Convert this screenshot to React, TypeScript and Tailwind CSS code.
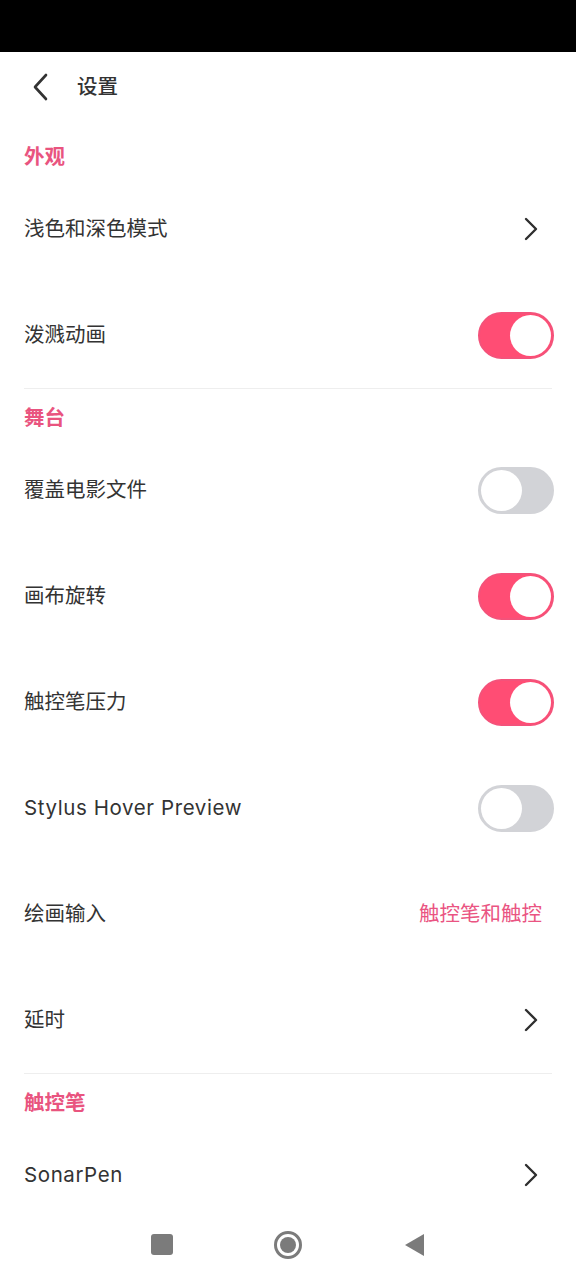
import React from 'react';

const font = { fontFamily: 'Inter, "Noto Sans CJK SC", sans-serif' };

type Row =
  | { label: string; kind: 'link' }
  | { label: string; kind: 'toggle'; on: boolean }
  | { label: string; kind: 'value'; value: string };

const sections: { title: string; rows: Row[] }[] = [
  {
    title: '外观',
    rows: [
      { label: '浅色和深色模式', kind: 'link' },
      { label: '泼溅动画', kind: 'toggle', on: true },
    ],
  },
  {
    title: '舞台',
    rows: [
      { label: '覆盖电影文件', kind: 'toggle', on: false },
      { label: '画布旋转', kind: 'toggle', on: true },
      { label: '触控笔压力', kind: 'toggle', on: true },
      { label: 'Stylus Hover Preview', kind: 'toggle', on: false },
      { label: '绘画输入', kind: 'value', value: '触控笔和触控' },
      { label: '延时', kind: 'link' },
    ],
  },
  {
    title: '触控笔',
    rows: [{ label: 'SonarPen', kind: 'link' }],
  },
];

// latin labels use a wider spacing so they come close to the app's geometric font
const isLatin = (s: string) => /^[A-Za-z ]+$/.test(s);

const Chevron = () => (
  <svg width="16" height="24" viewBox="0 0 16 24" fill="none" className="mr-[15px]">
    <path d="M3 2 L13 12 L3 22" stroke="#2f2f2f" strokeWidth="2.4" strokeLinecap="round" strokeLinejoin="round" />
  </svg>
);

const Toggle = ({ on }: { on: boolean }) => (
  <div
    className={`w-[76px] h-[47px] rounded-full border-2 flex items-center ${
      on ? 'bg-[#ff4d74] border-[#f4527a] justify-end' : 'bg-[#d2d3d7] border-[#d2d3d7] justify-start'
    }`}
  >
    <div className="w-[41px] h-[41px] rounded-full bg-white mx-[1px]" />
  </div>
);

export default function App() {
  return (
    <div className="w-[576px] h-[1280px] bg-white flex flex-col overflow-hidden" style={font}>
      {/* status bar */}
      <div className="h-[52px] bg-black shrink-0" />

      <div className="flex-1 overflow-hidden">
        {/* top bar */}
        <div className="h-[70px] flex items-center px-[30px] gap-[25px]">
          <svg width="22" height="28" viewBox="0 0 22 28" fill="none">
            <path d="M16 2 L5 14 L16 26" stroke="#333333" strokeWidth="2.6" strokeLinecap="round" strokeLinejoin="round" />
          </svg>
          <span className="text-[20.5px] font-medium text-[#333333] leading-none">设置</span>
        </div>

        {sections.map((s, si) => (
          <div key={s.title}>
            {si > 0 && <div className="mx-[24px] h-[1px] bg-[#eeeeee]" />}
            <div className={`px-[24px] ${si === 0 ? 'pt-[23px] pb-[7px]' : 'pt-[17px] pb-[7px]'}`}>
              <div className="text-[20.5px] leading-[24px] font-bold text-[#e9547f]">{s.title}</div>
            </div>
            {s.rows.map((r) => (
              <div key={r.label} className="h-[106px] flex items-center justify-between pl-[24px] pr-[22px]">
                <span
                  className={`text-[20.5px] text-[#333333] ${isLatin(r.label) ? 'tracking-[0.6px]' : ''}`}
                >
                  {r.label}
                </span>
                {r.kind === 'link' && <Chevron />}
                {r.kind === 'toggle' && <Toggle on={r.on} />}
                {r.kind === 'value' && (
                  <span className="text-[20.5px] text-[#ea5482] mr-[12px]">{r.value}</span>
                )}
              </div>
            ))}
          </div>
        ))}
      </div>

      {/* navigation bar */}
      <div className="h-[70px] shrink-0 bg-white flex items-center justify-center gap-[100px] pb-[1px]">
        <div className="w-[22px] h-[21px] rounded-[3px] bg-[#7b7b7b]" />
        <svg width="30" height="30" viewBox="0 0 30 30">
          <circle cx="15" cy="15" r="12.5" fill="none" stroke="#7b7b7b" strokeWidth="3" />
          <circle cx="15" cy="15" r="8" fill="#7b7b7b" />
        </svg>
        <svg width="22" height="24" viewBox="0 0 22 24">
          <path d="M21 1 L21 23 L2 12 Z" fill="#7b7b7b" strokeLinejoin="round" />
        </svg>
      </div>
    </div>
  );
}
